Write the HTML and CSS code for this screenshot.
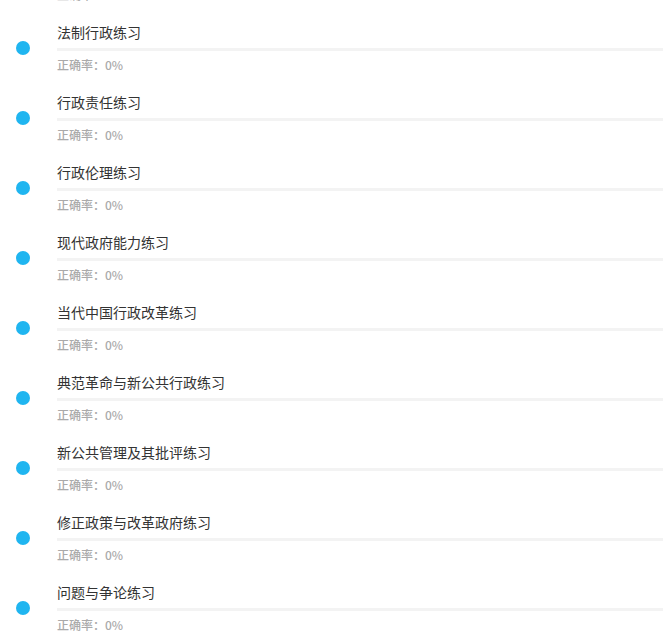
FILE: index.html
```html
<!DOCTYPE html>
<html lang="zh-CN">
<head>
<meta charset="utf-8">
<link rel="stylesheet" href="styles.css">
</head>
<body>
<ul class="list">
  <li class="item"><span class="dot"></span><div class="body"><div class="title">公共行政环境练习</div><div class="bar"></div><div class="rate">正确率：0%</div></div></li>
  <li class="item"><span class="dot"></span><div class="body"><div class="title">法制行政练习</div><div class="bar"></div><div class="rate">正确率：0%</div></div></li>
  <li class="item"><span class="dot"></span><div class="body"><div class="title">行政责任练习</div><div class="bar"></div><div class="rate">正确率：0%</div></div></li>
  <li class="item"><span class="dot"></span><div class="body"><div class="title">行政伦理练习</div><div class="bar"></div><div class="rate">正确率：0%</div></div></li>
  <li class="item"><span class="dot"></span><div class="body"><div class="title">现代政府能力练习</div><div class="bar"></div><div class="rate">正确率：0%</div></div></li>
  <li class="item"><span class="dot"></span><div class="body"><div class="title">当代中国行政改革练习</div><div class="bar"></div><div class="rate">正确率：0%</div></div></li>
  <li class="item"><span class="dot"></span><div class="body"><div class="title">典范革命与新公共行政练习</div><div class="bar"></div><div class="rate">正确率：0%</div></div></li>
  <li class="item"><span class="dot"></span><div class="body"><div class="title">新公共管理及其批评练习</div><div class="bar"></div><div class="rate">正确率：0%</div></div></li>
  <li class="item"><span class="dot"></span><div class="body"><div class="title">修正政策与改革政府练习</div><div class="bar"></div><div class="rate">正确率：0%</div></div></li>
  <li class="item"><span class="dot"></span><div class="body"><div class="title">问题与争论练习</div><div class="bar"></div><div class="rate">正确率：0%</div></div></li>
</ul>
</body>
</html>
```
FILE: styles.css
```css
html, body {
  margin: 0;
  padding: 0;
  background: #ffffff;
  overflow: hidden;
}
body {
  font-family: "Noto Sans CJK SC", "Noto Sans", sans-serif;
}
.list {
  list-style: none;
  margin: -60px 0 0 0;
  padding: 0;
}
.item {
  display: flex;
  align-items: flex-start;
  height: 70px;
  box-sizing: border-box;
  padding: 12px 0 0 16px;
}
.dot {
  flex: none;
  width: 14px;
  height: 14px;
  border-radius: 50%;
  background: #1fb5f0;
  margin-top: 19px;
  margin-right: 27px;
}
.body {
  flex: 1;
}
.title {
  font-size: 14px;
  line-height: 20px;
  color: #333333;
}
.bar {
  height: 3px;
  margin-top: 6px;
  background: #f3f3f3;
}
.rate {
  margin-top: 6px;
  font-size: 12px;
  line-height: 16px;
  font-weight: 500;
  color: #aaaaaa;
}
```
